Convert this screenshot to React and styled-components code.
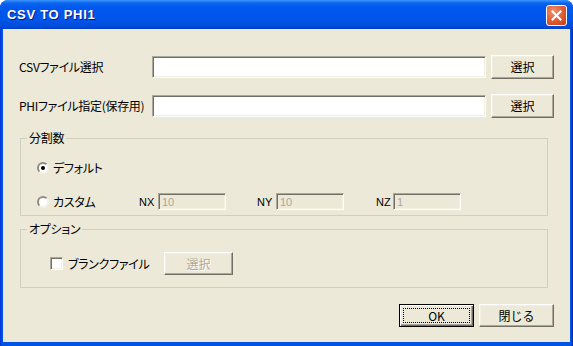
import styled, { createGlobalStyle } from "styled-components";

const GlobalStyle = createGlobalStyle`
  html, body {
    margin: 0;
    padding: 0;
    background: #ffffff;
  }
  body {
    font-family: "Noto Sans CJK JP", "Liberation Sans", sans-serif;
    font-size: 12px;
  }
`;

const Window = styled.div`
  width: 573px;
  height: 346px;
  box-sizing: border-box;
  display: flex;
  flex-direction: column;
  border-radius: 8px 8px 0 0;
  overflow: hidden;
  background: linear-gradient(90deg, #0831d9 0px, #0054e3 2px, #0054e3 calc(100% - 2px), #001ea0 100%);
`;

const TitleBar = styled.div`
  height: 29px;
  flex: none;
  display: flex;
  align-items: center;
  justify-content: space-between;
  padding: 0 6px 0 7px;
  box-sizing: border-box;
  background: linear-gradient(
    180deg,
    #3d95ff 0px,
    #0a66ec 3px,
    #0058ee 7px,
    #0055ea 20px,
    #004ddc 26px,
    #003fc6 29px
  );
`;

const Title = styled.span`
  font-family: "Liberation Sans", "DejaVu Sans", sans-serif;
  font-weight: bold;
  font-size: 13px;
  color: #ffffff;
  text-shadow: 1px 1px 0 #0a1883;
  letter-spacing: 0.7px;
`;

const CloseButton = styled.div`
  width: 19px;
  height: 19px;
  border: 1px solid #ffffff;
  border-radius: 3px;
  background: radial-gradient(circle at 35% 30%, #f0926c 0%, #e1592f 55%, #c23b14 100%);
  display: flex;
  align-items: center;
  justify-content: center;
  margin-top: 1px;
`;

const Client = styled.div`
  flex: 1;
  margin: 0 3px 4px;
  background: #ece9d8;
  padding: 26px 16px 0 16px;
  display: flex;
  flex-direction: column;
  color: #000;
  font-feature-settings: "palt";
  letter-spacing: -0.3px;
`;

const FileRow = styled.div`
  display: flex;
  align-items: center;
  height: 24px;
  margin-bottom: ${(p) => p.$gap || 0}px;
`;

const FieldLabel = styled.span`
  width: 133px;
  flex: none;
  line-height: 14px;
`;

const TextBox = styled.div`
  width: ${(p) => p.$w}px;
  height: ${(p) => p.$h}px;
  box-sizing: border-box;
  background: ${(p) => (p.$disabled ? "#ece9d8" : "#ffffff")};
  border: 1px solid;
  border-color: #aca899 #ffffff #ffffff #aca899;
  box-shadow: inset 1px 1px 0 #716f64, inset -1px -1px 0 #f1efe2;
  color: #aca899;
  padding: 0 3px;
  line-height: 14px;
  display: flex;
  align-items: center;
  font-family: "Liberation Sans", sans-serif;
  font-size: 11px;
  letter-spacing: 0;
`;

const Button = styled.button`
  position: relative;
  width: ${(p) => p.$w}px;
  height: ${(p) => p.$h}px;
  margin-left: ${(p) => p.$ml || 0}px;
  flex: none;
  box-sizing: border-box;
  background: #ece9d8;
  border: 1px solid;
  border-color: ${(p) => (p.$default ? "#000000" : "#ffffff #716f64 #716f64 #ffffff")};
  box-shadow: ${(p) =>
    p.$default
      ? "inset 1px 1px 0 #ffffff, inset -1px -1px 0 #716f64, inset -2px -2px 0 #aca899"
      : "inset -1px -1px 0 #aca899, inset 1px 1px 0 #f1efe2"};
  font-family: "Noto Sans CJK JP", "Liberation Sans", sans-serif;
  font-size: 12px;
  line-height: 14px;
  padding: 0;
  color: ${(p) => (p.disabled ? "#aca899" : "#000000")};
  text-shadow: ${(p) => (p.disabled ? "1px 1px 0 #ffffff" : "none")};

  ${(p) =>
    p.$default &&
    `
    &::after {
      content: "";
      position: absolute;
      inset: 3px;
      border: 1px dotted #000000;
    }
  `}
`;

const Group = styled.fieldset`
  margin: ${(p) => p.$top}px 6px 0 1px;
  padding: 0;
  border: 1px solid #d0d0bf;
  min-width: 0;
`;

const Legend = styled.legend`
  margin-left: 6px;
  padding: 0 2px;
  line-height: 14px;
  height: 14px;
`;

const GroupBody = styled.div`
  padding: ${(p) => p.$pad};
  display: flex;
  flex-direction: column;
`;

const OptionRow = styled.div`
  display: flex;
  align-items: center;
  height: ${(p) => p.$h || 17}px;
  margin-bottom: ${(p) => p.$gap || 0}px;
`;

const Radio = styled.span`
  width: 12px;
  height: 12px;
  box-sizing: border-box;
  flex: none;
  border-radius: 50%;
  background: #ffffff;
  border: 2px solid;
  border-color: #8e8b80 #f4f2e8 #f4f2e8 #8e8b80;
  display: flex;
  align-items: center;
  justify-content: center;
  &::after {
    content: "";
    width: 4px;
    height: 4px;
    border-radius: 50%;
    background: ${(p) => (p.$checked ? "#000000" : "transparent")};
  }
`;

const RadioLabel = styled.span`
  margin-left: 4px;
  width: ${(p) => p.$w}px;
  flex: none;
  line-height: 14px;
`;

const Axis = styled.div`
  display: flex;
  align-items: center;
  width: ${(p) => p.$w}px;
  flex: none;
`;

const AxisLabel = styled.span`
  width: ${(p) => p.$w}px;
  flex: none;
  font-family: "Liberation Sans", sans-serif;
  font-size: 11px;
  letter-spacing: 0;
`;

const CheckBox = styled.span`
  width: 13px;
  height: 13px;
  box-sizing: border-box;
  flex: none;
  background: #ffffff;
  border: 1px solid;
  border-color: #aca899 #ffffff #ffffff #aca899;
  box-shadow: inset 1px 1px 0 #716f64, inset -1px -1px 0 #f1efe2;
`;

const CheckLabel = styled.span`
  margin-left: 5px;
  width: 96px;
  flex: none;
  line-height: 14px;
`;

const Footer = styled.div`
  margin-top: 16px;
  display: flex;
  justify-content: flex-end;
`;

function CloseIcon() {
  return (
    <svg width="11" height="11" viewBox="0 0 11 11">
      <path d="M1.5 1.5 L9.5 9.5 M9.5 1.5 L1.5 9.5" stroke="#ffffff" strokeWidth="2" strokeLinecap="square" />
    </svg>
  );
}

export default function App() {
  return (
    <>
      <GlobalStyle />
      <Window>
        <TitleBar>
          <Title>CSV TO PHI1</Title>
          <CloseButton>
            <CloseIcon />
          </CloseButton>
        </TitleBar>
        <Client>
          <FileRow $gap={15}>
            <FieldLabel>CSVファイル選択</FieldLabel>
            <TextBox $w={334} $h={22} />
            <Button $w={63} $h={24} $ml={5}>選択</Button>
          </FileRow>
          <FileRow>
            <FieldLabel>PHIファイル指定(保存用)</FieldLabel>
            <TextBox $w={334} $h={22} />
            <Button $w={63} $h={24} $ml={5}>選択</Button>
          </FileRow>

          <Group $top={13}>
            <Legend>分割数</Legend>
            <GroupBody $pad="14px 0 5px 16px">
              <OptionRow $gap={17}>
                <Radio $checked />
                <RadioLabel $w={86}>デフォルト</RadioLabel>
              </OptionRow>
              <OptionRow>
                <Radio />
                <RadioLabel $w={86}>カスタム</RadioLabel>
                <Axis $w={118}>
                  <AxisLabel $w={19}>NX</AxisLabel>
                  <TextBox $w={68} $h={17} $disabled>10</TextBox>
                </Axis>
                <Axis $w={119}>
                  <AxisLabel $w={19}>NY</AxisLabel>
                  <TextBox $w={68} $h={17} $disabled>10</TextBox>
                </Axis>
                <Axis $w={86}>
                  <AxisLabel $w={17}>NZ</AxisLabel>
                  <TextBox $w={68} $h={17} $disabled>1</TextBox>
                </Axis>
              </OptionRow>
            </GroupBody>
          </Group>

          <Group $top={6}>
            <Legend>オプション</Legend>
            <GroupBody $pad="16px 0 12px 29px">
              <OptionRow $h={23}>
                <CheckBox />
                <CheckLabel>ブランクファイル</CheckLabel>
                <Button $w={69} $h={23} disabled>選択</Button>
              </OptionRow>
            </GroupBody>
          </Group>

          <Footer>
            <Button $w={75} $h={23} $default>OK</Button>
            <Button $w={75} $h={23} $ml={5}>閉じる</Button>
          </Footer>
        </Client>
      </Window>
    </>
  );
}
